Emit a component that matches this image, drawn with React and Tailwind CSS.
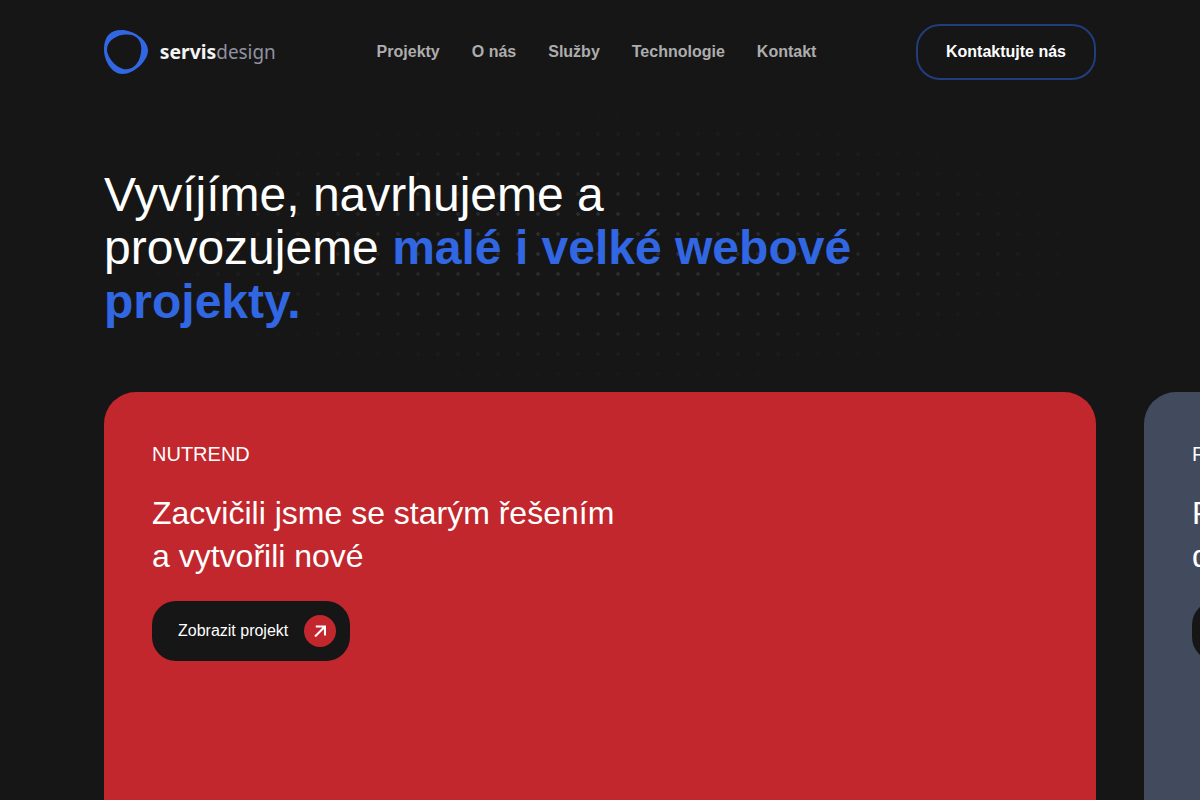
const navItems = ["Projekty", "O nás", "Služby", "Technologie", "Kontakt"];

const projects = [
  {
    client: "NUTREND",
    title: ["Zacvičili jsme se starým řešením", "a vytvořili nové"],
    card: "bg-[#c1272d]",
    badge: "bg-[#c1272d]",
  },
  {
    client: "FENIX",
    title: ["Přenesli jsme výrobu", "do online světa"],
    card: "bg-[#424a5e]",
    badge: "bg-[#424a5e]",
  },
];

function Logo() {
  return (
    <svg width="173" height="44" viewBox="0 0 173 44" className="block shrink-0">
      <path
        fill="#3267e3"
        fillRule="evenodd"
        d="M0 19.5C0 7 6 0 17.5 0C29 0 44 9.5 44 20.5C44 31 30 44 18.5 44C8 44 0 31 0 19.5ZM3 19.5C3 27 12.5 39.3 22.3 39.3C31 39.3 37.3 30 37.3 18.5C37.3 9 31.5 4.4 22.5 4.4C13 4.4 3 10.5 3 19.5Z"
      />
      <text x="55.8" y="29" textLength="56.5" lengthAdjust="spacingAndGlyphs" fill="#f4f4f4" className="font-['Noto_Sans',sans-serif] text-[19.5px] font-bold">
        servis
      </text>
      <text x="112.3" y="29" textLength="59.5" lengthAdjust="spacingAndGlyphs" fill="#9092a1" className="font-['Noto_Sans',sans-serif] text-[19.5px] font-normal">
        design
      </text>
    </svg>
  );
}

function Header() {
  return (
    <header className="flex h-[104px] items-center justify-between">
      <Logo />
      <nav className="flex gap-8 font-bold text-[#adadad]">
        {navItems.map((item) => (
          <a key={item} href="#">
            {item}
          </a>
        ))}
      </nav>
      <a href="#" className="flex h-14 w-[180px] items-center justify-center rounded-3xl border-2 border-[#213d7e] font-bold text-white">
        Kontaktujte nás
      </a>
    </header>
  );
}

function ProjectCard({ project }) {
  return (
    <article className={`h-[640px] w-[992px] shrink-0 rounded-[32px] p-12 ${project.card}`}>
      <p className="text-xl leading-7">{project.client}</p>
      <h2 className="mt-6 text-[32px] leading-[43px]">
        {project.title[0]}
        <br />
        {project.title[1]}
      </h2>
      <a href="#" className="mt-[23px] flex h-[60px] w-[198px] items-center justify-between rounded-3xl bg-[#161616] pr-3.5 pl-[26px]">
        Zobrazit projekt
        <span className={`flex size-8 items-center justify-center rounded-full ${project.badge}`}>
          <svg width="12" height="12" viewBox="0 0 12 12" fill="none" stroke="white" strokeWidth="2.1">
            <path d="M1.8 1.5H11V10.5M11 1.5L1 11.5" />
          </svg>
        </span>
      </a>
    </article>
  );
}

function App() {
  return (
    <div className="h-screen overflow-hidden bg-[#161616] px-[104px] font-['Liberation_Sans',Arial,sans-serif] text-base text-white">
      <Header />
      <main>
        <section className="relative h-72 pt-16">
          {/* Dotted backdrop fading out towards the edges */}
          <div className="absolute top-0 left-[4px] h-[288px] w-[1000px] bg-[radial-gradient(circle_at_center,#303030_2px,transparent_2px)] bg-[size:20px_20px] [mask-image:radial-gradient(500px_144px_at_500px_144px,black,transparent)]" />
          <h1 className="relative w-[750px] text-5xl leading-[53.3px]">
            Vyvíjíme, navrhujeme a provozujeme{" "}
            <strong className="font-bold text-[#3267e3]">malé i velké webové projekty.</strong>
          </h1>
        </section>
        <section className="flex gap-12">
          {projects.map((project) => (
            <ProjectCard key={project.client} project={project} />
          ))}
        </section>
      </main>
    </div>
  );
}

export default App;
